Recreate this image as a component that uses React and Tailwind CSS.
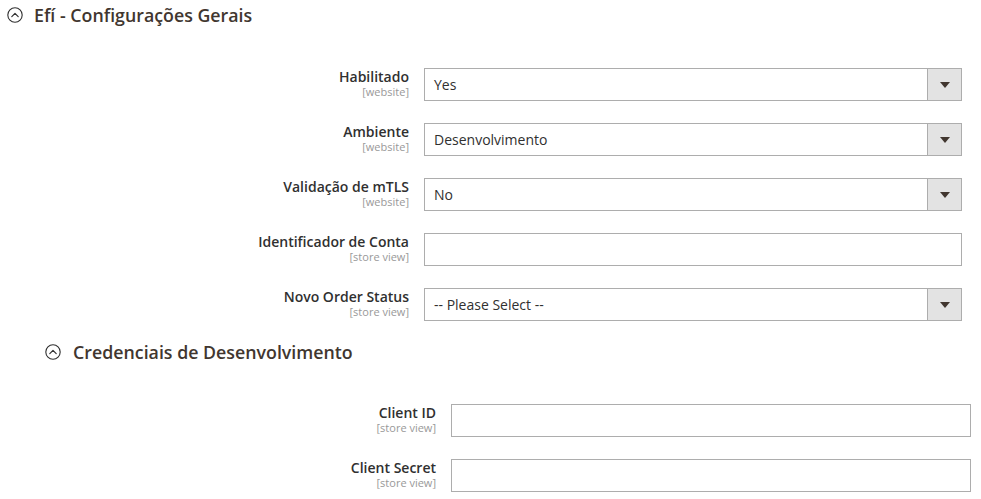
import React from "react";

const Toggle = () => (
  <svg width="16" height="16" viewBox="0 0 16 16" fill="none">
    <circle cx="8" cy="8" r="7.2" stroke="#303030" strokeWidth="1.1" />
    <path d="M4.8 9.6 L8 6.4 L11.2 9.6" stroke="#303030" strokeWidth="1.2" strokeLinecap="round" strokeLinejoin="round" />
  </svg>
);

const Field = ({ label, scope, value, select, labelW, inputW }) => (
  <div className="flex items-start gap-[15px]">
    <div className="text-right" style={{ width: labelW }}>
      <div className="text-[14px] leading-[18px] font-semibold text-[#303030]">{label}</div>
      <div className="text-[11px] leading-[12px] text-[#999999]">{scope}</div>
    </div>
    <div
      className="h-[33px] border border-[#adadad] bg-white flex items-stretch"
      style={{ width: inputW }}
    >
      <div className="flex-1 flex items-center pl-[9px] text-[14px] text-[#303030]">{value}</div>
      {select && (
        <div className="w-[34px] bg-[#e3e3e3] border-l border-[#adadad] flex items-center justify-center">
          <div className="w-0 h-0 border-l-[5px] border-r-[5px] border-t-[6px] border-l-transparent border-r-transparent border-t-[#41362f]" />
        </div>
      )}
    </div>
  </div>
);

export default function App() {
  const geral = [
    { label: "Habilitado", scope: "[website]", value: "Yes", select: true },
    { label: "Ambiente", scope: "[website]", value: "Desenvolvimento", select: true },
    { label: "Validação de mTLS", scope: "[website]", value: "No", select: true },
    { label: "Identificador de Conta", scope: "[store view]", value: "", select: false },
    { label: "Novo Order Status", scope: "[store view]", value: "-- Please Select --", select: true },
  ];
  const credenciais = [
    { label: "Client ID", scope: "[store view]" },
    { label: "Client Secret", scope: "[store view]" },
  ];

  return (
    <div className="w-[981px] h-[499px] overflow-hidden bg-white font-['Open_Sans',sans-serif]">
      {/* SEÇÃO GERAL */}
      <div className="flex items-center gap-[11px] pl-[7px] pt-[3px]">
        <Toggle />
        <h2 className="text-[17.8px] leading-[24px] font-semibold text-[#41362f]">Efí - Configurações Gerais</h2>
      </div>

      <div className="mt-[41px] flex flex-col gap-[22px]">
        {geral.map((f, i) => (
          <Field key={i} {...f} labelW={409} inputW={538} />
        ))}
      </div>

      {/* CREDENCIAIS */}
      <div className="mt-[19px] flex items-center gap-[12px] pl-[45px]">
        <Toggle />
        <h3 className="text-[17.8px] leading-[24px] font-semibold text-[#41362f]">Credenciais de Desenvolvimento</h3>
      </div>

      <div className="mt-[40px] flex flex-col gap-[22px]">
        {credenciais.map((f, i) => (
          <Field key={i} {...f} value="" labelW={436} inputW={520} />
        ))}
      </div>
    </div>
  );
}
